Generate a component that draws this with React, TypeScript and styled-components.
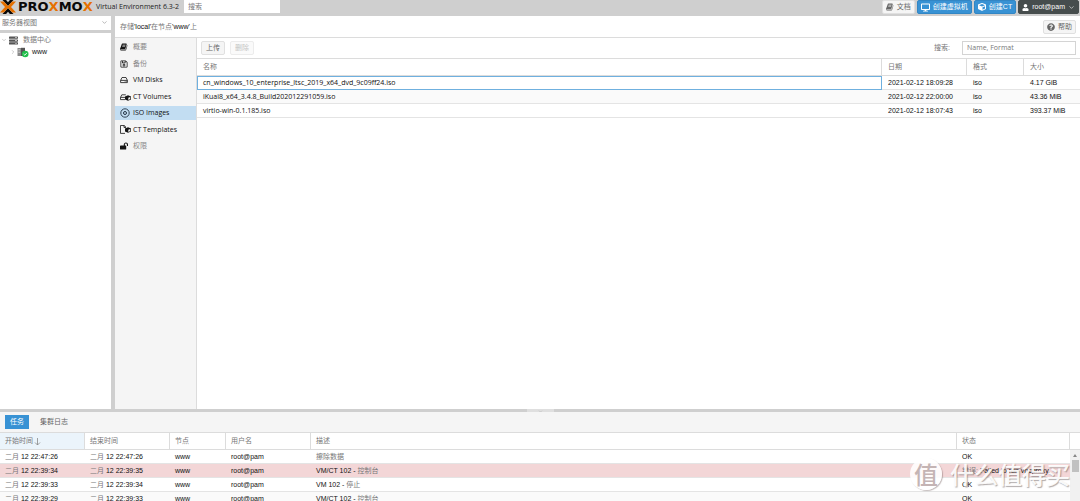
import React from 'react';
import styled, { createGlobalStyle, css } from 'styled-components';
import { FaDesktop, FaCube, FaUser, FaQuestionCircle, FaRegSave, FaLockOpen, FaServer } from 'react-icons/fa';
import { FiChevronDown, FiChevronRight } from 'react-icons/fi';

const Global = createGlobalStyle`
  * { box-sizing: border-box; }
  body {
    margin: 0;
    background: #fff;
    color: #111;
    font: 7px/14px "Liberation Sans", "Noto Sans CJK SC", sans-serif;
  }
  button, input, select { font: inherit; color: inherit; margin: 0; }
  ul { list-style: none; margin: 0; padding: 0; }
`;

const labelFont = css`
  font-family: "Open Sans", "Noto Sans CJK SC", sans-serif;
`;

const Shell = styled.div`
  display: flex;
  flex-direction: column;
  height: 100vh;
  overflow: hidden;
`;

const Header = styled.header`
  display: flex;
  align-items: flex-start;
  height: 16px;
  flex: none;
  padding-right: 1px;
  background: #cfcfcf;
`;

const Brand = styled.a`
  display: flex;
  align-items: center;
  height: 14px;
  width: 96px;
  gap: 2px;
  color: #0a0a0a;
  text-decoration: none;
  font: bold 13px/14px "DejaVu Sans", sans-serif;
  font-kerning: none;
`;

const Accent = styled.span`
  color: #e57000;
`;

const Version = styled.span`
  width: 88px;
  ${labelFont}
  color: #222;
  white-space: nowrap;
`;

const TextBox = styled.input<{ $width: number; $framed?: boolean }>`
  width: ${p => p.$width}px;
  height: ${p => (p.$framed ? 14 : 13)}px;
  padding: 0 4px;
  border: ${p => (p.$framed ? '1px solid #d4d4d4' : '0')};
  border-radius: 0;
  background: #fff;
  ${labelFont}
  &::placeholder { color: #777; opacity: 1; }
`;

const HeaderActions = styled.div`
  display: flex;
  gap: 2px;
  margin-left: auto;
`;

type Tone = 'light' | 'blue' | 'dark';
const tones = {
  light: css`background: #f5f5f5; border-color: #e0e0e0; color: #666;`,
  blue: css`background: #3892d4; border-color: #3286c4; color: #fff;`,
  dark: css`background: #464d4d; border-color: #464d4d; color: #fff;`,
};

const Button = styled.button<{ $tone?: Tone }>`
  display: inline-flex;
  align-items: center;
  justify-content: center;
  gap: 3px;
  height: 14px;
  padding: 0 3px;
  border: 1px solid;
  border-radius: 2px;
  line-height: 12px;
  white-space: nowrap;
  ${p => tones[p.$tone ?? 'light']}
  &:disabled { color: #c4c4c4; border-color: #ececec; background: #fafafa; }
`;

const ToolbarButton = styled(Button)`
  padding: 0 4px;
`;

const Upper = styled.div`
  display: flex;
  flex: 1;
  min-height: 0;
`;

const Tree = styled.aside`
  display: flex;
  flex-direction: column;
  flex: none;
  width: 115px;
  border-right: 4px solid #cfcfcf;
`;

const ViewPicker = styled.div`
  position: relative;
  height: 17px;
  border-bottom: 3px solid #cfcfcf;
  svg { position: absolute; right: 3px; top: 3px; color: #888; pointer-events: none; }
`;

const ViewSelect = styled.select`
  display: block;
  width: 100%;
  height: 14px;
  padding: 0 2px;
  border: 0;
  appearance: none;
  background: #fff;
  color: #777;
`;

const TreeRow = styled.li<{ $level: number }>`
  display: flex;
  align-items: center;
  gap: ${p => (p.$level ? 1 : 2)}px;
  height: 12px;
  padding-left: ${p => 1 + p.$level * 9}px;
  > svg:first-child { color: #999; }
  > span { margin-left: ${p => (p.$level ? 2 : 3)}px; }
`;

const TreeList = styled.ul`
  padding-top: 1px;
`;

const Han = styled.span`
  color: #777;
`;

const Content = styled.main`
  display: flex;
  flex-direction: column;
  flex: 1;
  min-width: 0;
`;

const TitleBar = styled.div`
  display: flex;
  align-items: center;
  justify-content: space-between;
  flex: none;
  height: 22px;
  padding: 0 4px 0 5px;
  border-bottom: 1px solid #dcdcdc;
`;

const ContentBody = styled.div`
  display: flex;
  flex: 1;
  min-height: 0;
`;

const Side = styled.nav`
  flex: none;
  width: 82px;
  padding-top: 2px;
  background: #f5f5f5;
  border-right: 1px solid #dcdcdc;
`;

const SideList = styled.ul`
  display: flex;
  flex-direction: column;
  justify-content: space-between;
  height: 113px;
`;

const SideLink = styled.a<{ $active?: boolean; $muted?: boolean }>`
  display: flex;
  align-items: center;
  gap: 2px;
  height: 14px;
  padding-left: 5px;
  ${labelFont}
  color: ${p => (p.$muted ? '#888' : '#111')};
  background: ${p => (p.$active ? '#c2ddf2' : 'transparent')};
  text-decoration: none;
`;

const IconSlot = styled.span`
  display: flex;
  align-items: center;
  width: 11px;
  color: #151515;
`;

const Panel = styled.section`
  flex: 1;
  min-width: 0;
`;

const Toolbar = styled.div`
  display: flex;
  align-items: center;
  gap: 5px;
  height: 20px;
  padding: 0 4px;
`;

const SearchLabel = styled.label`
  margin-left: auto;
  padding-right: 7px;
  color: #777;
`;

const Grid = styled.table`
  width: 100%;
  table-layout: fixed;
  border-collapse: separate;
  border-spacing: 0;
  white-space: nowrap;
  th, td { padding: 0 6px; overflow: hidden; text-align: left; font-weight: normal; }
  th {
    height: 18px;
    color: #777;
    border-top: 1px solid #dcdcdc;
    border-bottom: 1px solid #dcdcdc;
    border-right: 1px solid #dcdcdc;
    background: #fff;
  }
  th:last-child { border-right: 0; }
  td { height: 14px; line-height: 13px; border-bottom: 1px solid #e4e4e4; }
`;

const FileRow = styled.tr<{ $focused?: boolean }>`
  &:nth-child(even) td { background: #fafafa; }
  td:first-child { ${labelFont} }
  ${p => p.$focused && css`
    td:first-child { outline: 1px solid #6fb0df; outline-offset: -1px; }
  `}
`;

const TaskGrid = styled(Grid)`
  th, td { padding: 0 5px; }
  th:first-child { background: #ebf4fb; }
`;

const TaskRow = styled.tr<{ $failed?: boolean }>`
  &:nth-child(even) td { background: #fafafa; }
  ${p => p.$failed && css`&&& td { background: #f3d6d7; }`}
`;

const Splitter = styled.div`
  display: flex;
  justify-content: center;
  flex: none;
  height: 3px;
  background: #cfcfcf;
`;

const Grip = styled.span`
  display: flex;
  justify-content: center;
  width: 27px;
  background: #dfdfdf;
  color: #aaa;
`;

const Log = styled.section`
  position: relative;
  flex: none;
  height: 89px;
  overflow: hidden;
  background: #fff;
`;

const Tabs = styled.div`
  display: flex;
  align-items: center;
  gap: 6px;
  height: 20px;
  padding: 0 5px;
  background: #f5f5f5;
`;

const Tab = styled.button<{ $active?: boolean }>`
  height: 14px;
  padding: 0 5px;
  border: 0;
  line-height: 14px;
  background: ${p => (p.$active ? '#3892d4' : 'transparent')};
  color: ${p => (p.$active ? '#fff' : '#666')};
`;

const SortLabel = styled.span`
  display: flex;
  align-items: center;
  gap: 1px;
`;

const ScrollTrack = styled.div`
  position: absolute;
  top: 38px;
  right: 0;
  bottom: 0;
  width: 10px;
  display: flex;
  flex-direction: column;
  align-items: center;
  gap: 3px;
  padding-top: 4px;
  background: #f1f1f1;
`;

const Thumb = styled.span`
  width: 7px;
  height: 12px;
  background: #c1c1c1;
`;

const Watermark = styled.div`
  position: absolute;
  right: 10px;
  bottom: 10px;
  display: flex;
  align-items: center;
  gap: 8px;
  color: rgba(255, 255, 255, 0.92);
  font: 500 24px/34px "Noto Sans CJK SC", sans-serif;
  text-shadow: 1px 1px 1px rgba(100, 90, 90, 0.5);
  pointer-events: none;
`;

const Seal = styled.span`
  width: 32px;
  height: 32px;
  border-radius: 50%;
  background: rgba(255, 255, 255, 0.88);
  box-shadow: 1px 1px 1px rgba(110, 90, 90, 0.4);
  color: #c4b4b4;
  font-size: 24px;
  line-height: 31px;
  text-align: center;
  text-shadow: none;
`;

const LogoMark = () => (
  <svg width="16" height="14" viewBox="0 0 16 14" aria-hidden="true">
    <path d="M2.5 0h3.6L8 2.2 9.9 0h3.6L8 6z" fill="#0a0a0a" />
    <path d="M2.5 14h3.6L8 11.8 9.9 14h3.6L8 8z" fill="#0a0a0a" />
    <path d="M0 1.5h3.8L8 6l4.2-4.5H16L11 7l5 5.5h-3.8L8 8l-4.2 4.5H0L5 7z" fill="#e57000" />
  </svg>
);

const BookIcon = () => (
  <svg width="8" height="8" viewBox="0 0 1792 1792" fill="currentColor" aria-hidden="true">
    <path d="M1639 478q40 57 18 129l-275 906q-19 64-76.5 107.5t-122.5 43.5h-923q-77 0-148.5-53.5t-99.5-131.5q-24-67-2-127 0-4 3-27t4-37q1-8-3-21.5t-3-19.5q2-11 8-21t16.5-23.5 16.5-23.5q23-38 45-91.5t30-91.5q3-10 .5-30t-.5-28q3-11 17-28t17-23q21-36 42-92t25-90q1-9-2.5-32t.5-28q4-13 22-30.5t22-22.5q19-26 42.5-84.5t27.5-96.5q1-8-3-25.5t-2-26.5q2-8 9-18t18-23 17-21q8-12 16.5-30.5t15-35 16-36 19.5-32 26.5-23.5 36-11.5 47.5 5.5l-1 3q38-9 51-9h761q74 0 114 56t18 130l-274 906q-36 119-71.5 153.5t-128.5 34.5h-869q-27 0-38 15-11 16-1 43 24 70 144 70h923q29 0 56-15.5t35-41.5l300-987q7-22 5-57 38 15 59 43zm-1064 2q-4 13 2 22.5t20 9.5h608q13 0 25.5-9.5t16.5-22.5l21-64q4-13-2-22.5t-20-9.5h-608q-13 0-25.5 9.5t-16.5 22.5zm-83 256q-4 13 2 22.5t20 9.5h608q13 0 25.5-9.5t16.5-22.5l21-64q4-13-2-22.5t-20-9.5h-608q-13 0-25.5 9.5t-16.5 22.5z" />
  </svg>
);

const DiskIcon = () => (
  <svg width="8" height="8" viewBox="0 0 8 8" fill="none" stroke="currentColor" strokeWidth=".8" aria-hidden="true">
    <path d="M.6 4.4h6.8v2.2H.6zM.6 4.4 2 1.5h4l1.4 2.9M4.8 5.5h.6m.6 0h.6" />
  </svg>
);

const Cube = () => (
  <>
    <path d="M8 2.2 11 3.4v3L8 7.8 5 6.4v-3z" fill="currentColor" />
    <path d="M8.3 4.7 10.3 3.9v2.2l-2 .9z" fill="#f5f5f5" />
  </>
);

const VolumeIcon = () => (
  <svg width="11" height="8" viewBox="0 0 11 8" aria-hidden="true">
    <path d="M5 6.6H.5V4.4H5M.5 4.4 1.8 1.8h4" fill="none" stroke="currentColor" strokeWidth=".8" />
    <Cube />
  </svg>
);

const TemplateIcon = () => (
  <svg width="11" height="9" viewBox="0 0 11 9" aria-hidden="true">
    <path d="M5 8.4H.5V.5h3.6L6 2.2M4 .5v2h2" fill="none" stroke="currentColor" strokeWidth=".8" />
    <Cube />
  </svg>
);

const DiscIcon = () => (
  <svg width="10" height="10" viewBox="0 0 10 10" aria-hidden="true">
    <circle cx="5" cy="5" r="4.2" fill="none" stroke="#234" strokeWidth=".9" />
    <circle cx="5" cy="5" r="1.5" fill="none" stroke="#234" strokeWidth="1" />
  </svg>
);

const NodeIcon = () => (
  <svg width="12" height="11" viewBox="0 0 12 11" aria-hidden="true">
    <path d="M.5 1h4v8h-4z" fill="#888" />
    <path d="M4 .8h4V9H4z" fill="#555" />
    <path d="M1.3 2.5h2M1.3 4h2M1.3 5.5h2" stroke="#ddd" strokeWidth=".6" />
    <circle cx="8.2" cy="7" r="3.3" fill="#21bf4b" />
    <path d="m6.6 7 1.2 1.2 2.1-2.3" fill="none" stroke="#fff" strokeWidth=".9" />
  </svg>
);

const SortArrow = () => (
  <svg width="7" height="9" viewBox="0 0 7 9" aria-hidden="true">
    <path d="M3.5 1v7M1 5.5 3.5 8 6 5.5" fill="none" stroke="#888" strokeWidth=".8" />
  </svg>
);

const sections = [
  { label: '概要', icon: <BookIcon />, muted: true },
  { label: '备份', icon: <FaRegSave size={8} />, muted: true },
  { label: 'VM Disks', icon: <DiskIcon /> },
  { label: 'CT Volumes', icon: <VolumeIcon /> },
  { label: 'ISO Images', icon: <DiscIcon />, active: true },
  { label: 'CT Templates', icon: <TemplateIcon /> },
  { label: '权限', icon: <FaLockOpen size={8} />, muted: true },
];

const files = [
  ['cn_windows_10_enterprise_ltsc_2019_x64_dvd_9c09ff24.iso', '2021-02-12 18:09:28', 'iso', '4.17 GiB'],
  ['iKuai8_x64_3.4.8_Build202012291059.iso', '2021-02-12 22:00:00', 'iso', '43.36 MiB'],
  ['virtio-win-0.1.185.iso', '2021-02-12 18:07:43', 'iso', '393.37 MiB'],
];

const tasks = [
  { start: '22:47:26', end: '22:47:26', what: '', han: '擦除数据', status: 'OK' },
  { start: '22:39:34', end: '22:39:35', what: 'VM/CT 102 - ', han: '控制台', status: 'Failed to run vncproxy.', failed: true },
  { start: '22:39:33', end: '22:39:34', what: 'VM 102 - ', han: '停止', status: 'OK' },
  { start: '22:39:29', end: '22:39:33', what: 'VM/CT 102 - ', han: '控制台', status: 'OK' },
];

export default function App() {
  return (
    <Shell>
      <Global />
      <Header>
        <Brand href="#" aria-label="Proxmox">
          <LogoMark />
          <span>PRO<Accent>X</Accent>MO<Accent>X</Accent></span>
        </Brand>
        <Version>Virtual Environment 6.3-2</Version>
        <TextBox $width={96} placeholder="搜索" aria-label="搜索" />
        <HeaderActions>
          <Button><BookIcon />文档</Button>
          <Button $tone="blue"><FaDesktop size={9} />创建虚拟机</Button>
          <Button $tone="blue"><FaCube size={8} />创建CT</Button>
          <Button $tone="dark"><FaUser size={7} />root@pam<FiChevronDown size={7} /></Button>
        </HeaderActions>
      </Header>
      <Upper>
        <Tree>
          <ViewPicker>
            <ViewSelect aria-label="视图"><option>服务器视图</option></ViewSelect>
            <FiChevronDown size={7} />
          </ViewPicker>
          <TreeList>
            <TreeRow $level={0}><FiChevronDown size={6} /><FaServer size={9} color="#555" /><span><Han>数据中心</Han></span></TreeRow>
            <TreeRow $level={1}><FiChevronRight size={6} /><NodeIcon /><span>www</span></TreeRow>
          </TreeList>
        </Tree>
        <Content>
          <TitleBar>
            <span><Han>存储</Han>'local'<Han>在节点</Han>'www'<Han>上</Han></span>
            <Button><FaQuestionCircle size={8} />帮助</Button>
          </TitleBar>
          <ContentBody>
            <Side>
              <SideList>
                {sections.map(s => (
                  <li key={s.label}>
                    <SideLink href="#" $active={s.active} $muted={s.muted}>
                      <IconSlot>{s.icon}</IconSlot>{s.label}
                    </SideLink>
                  </li>
                ))}
              </SideList>
            </Side>
            <Panel>
              <Toolbar>
                <ToolbarButton>上传</ToolbarButton>
                <ToolbarButton disabled>删除</ToolbarButton>
                <SearchLabel htmlFor="filter">搜索:</SearchLabel>
                <TextBox id="filter" $width={114} $framed placeholder="Name, Format" />
              </Toolbar>
              <Grid>
                <colgroup><col /><col width="85" /><col width="57" /><col width="56" /></colgroup>
                <thead><tr><th>名称</th><th>日期</th><th>格式</th><th>大小</th></tr></thead>
                <tbody>
                  {files.map((f, i) => (
                    <FileRow key={f[0]} $focused={i === 0}>{f.map((v, j) => <td key={j}>{v}</td>)}</FileRow>
                  ))}
                </tbody>
              </Grid>
            </Panel>
          </ContentBody>
        </Content>
      </Upper>
      <Splitter><Grip><FiChevronDown size={5} /></Grip></Splitter>
      <Log>
        <Tabs>
          <Tab $active>任务</Tab>
          <Tab>集群日志</Tab>
        </Tabs>
        <TaskGrid>
          <colgroup>
            <col width="85" /><col width="85" /><col width="56" /><col width="85" /><col /><col width="113" /><col width="10" />
          </colgroup>
          <thead>
            <tr><th><SortLabel>开始时间<SortArrow /></SortLabel></th><th>结束时间</th><th>节点</th><th>用户名</th><th>描述</th><th>状态</th><th aria-label="滚动" /></tr>
          </thead>
          <tbody>
            {tasks.map(t => (
              <TaskRow key={t.start} $failed={t.failed}>
                <td><Han>二月</Han> 12 {t.start}</td>
                <td><Han>二月</Han> 12 {t.end}</td>
                <td>www</td>
                <td>root@pam</td>
                <td>{t.what}<Han>{t.han}</Han></td>
                <td>{t.failed && <Han>错误: </Han>}{t.status}</td>
                <td />
              </TaskRow>
            ))}
          </tbody>
        </TaskGrid>
        <ScrollTrack>
          <svg width="4" height="3" viewBox="0 0 4 3" aria-hidden="true"><path d="M0 3h4L2 0z" fill="#888" /></svg>
          <Thumb />
        </ScrollTrack>
        <Watermark><Seal>值</Seal>什么值得买</Watermark>
      </Log>
    </Shell>
  );
}
